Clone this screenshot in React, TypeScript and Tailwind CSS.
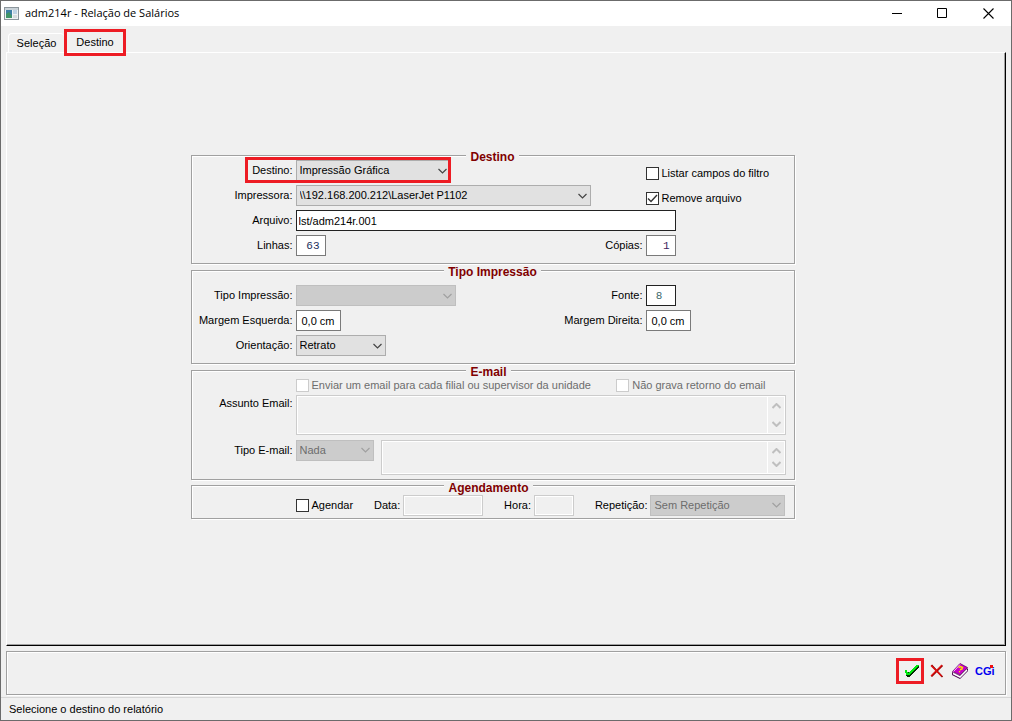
import type { ReactNode } from 'react';
import clsx from 'clsx';

const Chevron = ({ up = false, bold = false }: { up?: boolean; bold?: boolean }) => (
  <svg width="9" height="6" viewBox="0 0 9 6" fill="none" stroke="currentColor" strokeWidth={bold ? 2 : 1.2}>
    <path d={up ? 'M.5 5l4-4 4 4' : 'M.5 1l4 4 4-4'} />
  </svg>
);

const Highlight = ({ className }: { className: string }) => (
  <span className={clsx('pointer-events-none absolute border-3 border-[#ed1c24]', className)} />
);

const Group = ({ title, className, children }: { title: string; className?: string; children: ReactNode }) => (
  <fieldset
    className={clsx(
      'min-w-0 border border-[#a0a0a0] shadow-[1px_1px_0_#fff,inset_1px_1px_0_#fff]',
      className,
    )}
  >
    <legend className="mx-auto h-2 bg-[#f0f0f0] px-1 text-[12px] leading-3 font-bold text-[#800000]">{title}</legend>
    {children}
  </fieldset>
);

const Label = ({ htmlFor, top = false, children }: { htmlFor: string; top?: boolean; children: ReactNode }) => (
  <label
    htmlFor={htmlFor}
    className={clsx('h-[21px] text-right whitespace-nowrap', top ? 'leading-4' : 'leading-[21px]')}
  >
    {children}
  </label>
);

type SelectProps = { id: string; value?: string; className: string; disabled?: boolean };

const Select = ({ id, value = '', className, disabled }: SelectProps) => (
  <span className={clsx('relative block h-[21px]', className)}>
    <select
      id={id}
      disabled={disabled}
      className="block h-full w-full appearance-none border border-[#adadad] bg-[#e1e1e1] pl-[3px] opacity-100 disabled:border-[#bfbfbf] disabled:bg-[#ccc] disabled:text-[#6d6d6d]"
    >
      <option>{value}</option>
    </select>
    <span
      className={clsx(
        'pointer-events-none absolute inset-y-0 right-1 flex items-center',
        disabled ? 'text-[#a0a0a0]' : 'text-[#444]',
      )}
    >
      <Chevron />
    </span>
  </span>
);

type InputProps = { id: string; value?: string; className: string; disabled?: boolean };

const Input = ({ id, value = '', className, disabled }: InputProps) => (
  <input
    id={id}
    type="text"
    defaultValue={value}
    disabled={disabled}
    className={clsx(
      'block h-[21px] border disabled:border-[#ccc] disabled:bg-[#f0f0f0] disabled:shadow-[inset_0_0_0_1px_#fff]',
      !disabled && 'bg-white',
      className,
    )}
  />
);

type CheckProps = { id: string; label: string; checked?: boolean; disabled?: boolean; className?: string };

const Check = ({ id, label, checked, disabled, className }: CheckProps) => (
  <label
    htmlFor={id}
    className={clsx('flex items-center gap-[3px] whitespace-nowrap', disabled && 'text-[#6d6d6d]', className)}
  >
    <span className="relative block size-[13px]">
      <input
        id={id}
        type="checkbox"
        defaultChecked={checked}
        disabled={disabled}
        className="peer block size-[13px] appearance-none border border-[#333] bg-white disabled:border-[#ccc]"
      />
      <svg
        className="pointer-events-none absolute inset-0 hidden peer-checked:block"
        viewBox="0 0 13 13"
        fill="none"
        stroke="#333"
        strokeWidth="1.4"
      >
        <path d="M2 6.5l3 3 6-6.500" />
      </svg>
    </span>
    {label}
  </label>
);

const Memo = ({ id, label, className }: { id: string; label?: string; className: string }) => (
  <div className={clsx('flex border border-[#ccc] shadow-[inset_0_0_0_1px_#fff]', className)}>
    <textarea id={id} aria-label={label} disabled className="m-px min-w-0 flex-1 resize-none" />
    <div className="flex w-[18px] flex-col items-center justify-between border-l border-white py-[7px] text-[#bfbfbf]">
      <Chevron up bold />
      <Chevron bold />
    </div>
  </div>
);

const TitleBar = () => (
  <header className="flex h-[25px] items-center bg-white pl-[3px] font-['Open_Sans','Noto_Sans',sans-serif] text-[11px]">
    <svg width="15" height="13" viewBox="0 0 15 13" aria-hidden="true">
      <rect x=".5" y=".5" width="14" height="12" fill="#eef2f4" stroke="#8b959b" />
      <rect x="1" y="1" width="13" height="2" fill="#c9d2d8" />
      <rect x="2" y="3" width="6" height="8" fill="#3d7fa6" />
      <path d="M2 11V7l3-2 3 4v2z" fill="#3f9468" />
      <rect x="9" y="3" width="4" height="4" fill="#bed3e4" />
      <rect x="9" y="8" width="4" height="3" fill="#d7dcdf" />
    </svg>
    <h1 className="ml-[6px] flex-1">adm214r - Relação de Salários</h1>
    <button aria-label="Minimizar" className="flex h-full w-[45px] items-center justify-center">
      <svg width="11" height="11" stroke="#000"><path d="M0 5.5h10" /></svg>
    </button>
    <button aria-label="Maximizar" className="flex h-full w-[45px] items-center justify-center">
      <svg width="11" height="11" fill="none" stroke="#000"><path d="M.5 .5h9v9h-9z" /></svg>
    </button>
    <button aria-label="Fechar" className="flex h-full w-[46px] items-center justify-center">
      <svg width="11" height="11" stroke="#000" strokeWidth="1.1"><path d="M.5 .5l10 10M10.5 .5l-10 10" /></svg>
    </button>
  </header>
);

const Tabs = () => (
  <div role="tablist" className="flex h-[26px] items-end pl-[7px]">
    <button
      role="tab"
      aria-selected="false"
      className="h-[19px] w-14 rounded-t-sm border-t border-l border-white"
    >
      Seleção
    </button>
    <button role="tab" aria-selected="true" className="relative h-[23px] w-[62px] pt-1">
      Destino
      <Highlight className="inset-x-0 top-0 -bottom-1" />
    </button>
  </div>
);

const row = 'grid grid-cols-[101px_347px_1fr] gap-x-[3px]';

const DestinoForm = () => (
  <form className="mx-auto flex w-full max-w-[604px] flex-col gap-[2px]">
    <Group title="Destino" className="pb-[3px]">
      <div className={clsx(row, 'auto-rows-[25px] pt-px')}>
        <Label htmlFor="destino">Destino:</Label>
        <div className="relative w-[155px]">
          <Select id="destino" value="Impressão Gráfica" className="w-full" />
          <Highlight className="-top-[3px] right-0 -left-[51px] h-[26px]" />
        </div>
        <Check id="listar" label="Listar campos do filtro" className="pt-[2px]" />
        <Label htmlFor="impressora">Impressora:</Label>
        <Select id="impressora" value="\\192.168.200.212\LaserJet P1102" className="w-[295px]" />
        <Check id="remove" label="Remove arquivo" checked className="pt-[2px]" />
        <Label htmlFor="arquivo">Arquivo:</Label>
        <div className="col-span-2">
          <Input id="arquivo" value="lst/adm214r.001" className="w-[380px] border-[#222] px-[2px]" />
        </div>
        <Label htmlFor="linhas">Linhas:</Label>
        <div className="flex justify-between">
          <Input
            id="linhas"
            value="63"
            className="w-[30px] border-[#7a7a7a] pr-[5px] text-right font-['Liberation_Mono',monospace] text-[#1c2f5c]"
          />
          <Label htmlFor="copias">Cópias:</Label>
        </div>
        <Input
          id="copias"
          value="1"
          className="w-[30px] border-[#7a7a7a] pr-[5px] text-right font-['Liberation_Mono',monospace] text-[#3c1c5c]"
        />
      </div>
    </Group>

    <Group title="Tipo Impressão" className="pb-[3px]">
      <div className={clsx(row, 'auto-rows-[25px] pt-[11px]')}>
        <Label htmlFor="tipo">Tipo Impressão:</Label>
        <div className="flex justify-between">
          <Select id="tipo" disabled className="w-40" />
          <Label htmlFor="fonte">Fonte:</Label>
        </div>
        <Input
          id="fonte"
          value="8"
          className="w-[30px] border-[#222] pr-[3px] text-center font-['Liberation_Mono',monospace] text-[#3d6b6b]"
        />
        <Label htmlFor="esquerda">Margem Esquerda:</Label>
        <div className="flex justify-between">
          <Input id="esquerda" value="0,0 cm" className="w-[45px] border-[#7a7a7a] text-center" />
          <Label htmlFor="direita">Margem Direita:</Label>
        </div>
        <Input id="direita" value="0,0 cm" className="w-[45px] border-[#7a7a7a] text-center" />
        <Label htmlFor="orientacao">Orientação:</Label>
        <Select id="orientacao" value="Retrato" className="w-[90px]" />
      </div>
    </Group>

    <Group title="E-mail" className="pr-2 pb-1">
      <div className="flex items-center justify-between pt-[3px] pr-5 pl-[104px]">
        <Check id="enviar" label="Enviar um email para cada filial ou supervisor da unidade" disabled />
        <Check id="naograva" label="Não grava retorno do email" disabled />
      </div>
      <div className="grid grid-cols-[101px_1fr] gap-x-[3px] gap-y-[5px] pt-px">
        <Label htmlFor="assunto" top>Assunto Email:</Label>
        <Memo id="assunto" className="h-10" />
        <Label htmlFor="tipoemail">Tipo E-mail:</Label>
        <div className="flex gap-[7px]">
          <Select id="tipoemail" value="Nada" disabled className="w-[78px]" />
          <Memo id="texto" label="Texto do email" className="h-[35px] flex-1" />
        </div>
      </div>
    </Group>

    <Group title="Agendamento" className="pr-2 pb-[2px]">
      <div className="flex items-center justify-between pt-[5px] pl-[104px]">
        <Check id="agendar" label="Agendar" />
        <div className="flex gap-[3px]">
          <Label htmlFor="data">Data:</Label>
          <Input id="data" disabled className="w-20" />
        </div>
        <div className="flex gap-[3px]">
          <Label htmlFor="hora">Hora:</Label>
          <Input id="hora" disabled className="w-10" />
        </div>
        <div className="flex gap-[3px]">
          <Label htmlFor="repeticao">Repetição:</Label>
          <Select id="repeticao" value="Sem Repetição" disabled className="w-[135px]" />
        </div>
      </div>
    </Group>
  </form>
);

const Toolbar = () => (
  <div className="mx-[5px] mt-[5px] flex h-[44px] items-center justify-end gap-[5px] border border-[#a0a0a0] pr-3 pb-1 shadow-[1px_1px_0_#fff,inset_1px_1px_0_#fff]">
    <button aria-label="Confirmar" className="relative flex h-[26px] w-7 items-center justify-center">
      <svg width="14" height="14" viewBox="0 0 14 14" className="ml-1" shapeRendering="crispEdges">
        <path d="M1 8h3l8-6h2v1L5 13H2L1 12z" fill="#022c02" />
        <path d="M0 6h2l1 3L12 1h2L4 11H1z" fill="#00e810" />
      </svg>
      <Highlight className="inset-0" />
    </button>
    <button aria-label="Cancelar" className="flex h-[26px] w-4 items-center justify-center">
      <svg width="14" height="14" viewBox="0 0 14 14" fill="none">
        <path d="M1.5 1l11 12M12.5 1.5l-11 11" stroke="#8b0000" strokeWidth="1.6" />
        <path d="M1 1.5L11.5 12M12 1L1 12" stroke="#e01010" strokeWidth="1.4" />
      </svg>
    </button>
    <button aria-label="Ajuda" className="flex h-[26px] w-5 items-center justify-center">
      <svg width="16" height="16" viewBox="0 0 16 16">
        <path d="M0 9l8 3.500L16 5v3l-8 8-8-4z" fill="#4a0050" />
        <path d="M1 10.5l7 3.500 7-7" stroke="#fff" strokeWidth="1.5" fill="none" />
        <path d="M.5 8.500L8 .5l7.500 4L8 12z" fill="#c800c8" stroke="#500050" strokeWidth=".7" />
        <path d="M1.500 8.500L8 1.500" stroke="#ffb8ff" fill="none" />
        <path d="M6.500 4.500l2-1 2 1-.5 1.500-2 .7M7 8.300l1 .5" stroke="#ffe000" strokeWidth="1.5" fill="none" />
      </svg>
    </button>
    <button
      aria-label="CGi"
      className="relative h-[26px] w-[18px] font-['Liberation_Sans',sans-serif] text-[11px] leading-[26px] font-bold text-[#0000f0]"
    >
      CGi
      <span className="absolute top-[7px] right-0 size-[3px] bg-[#f01010]" />
    </button>
  </div>
);

export default function App() {
  return (
    <div className="flex min-h-screen flex-col border border-[#6b6b6b] bg-[#f0f0f0] font-['Liberation_Sans',Arial,sans-serif] text-[11px] text-black">
      <TitleBar />
      <Tabs />
      <main className="mx-[5px] flex-1 border border-t-white border-r-black border-b-black border-l-white pt-[98px] pr-[27px] shadow-[inset_-1px_-1px_0_#a0a0a0]">
        <DestinoForm />
      </main>
      <Toolbar />
      <footer className="mt-[2px] flex h-[23px] items-center border-t border-[#d7d7d7] pl-2">
        Selecione o destino do relatório
      </footer>
    </div>
  );
}
